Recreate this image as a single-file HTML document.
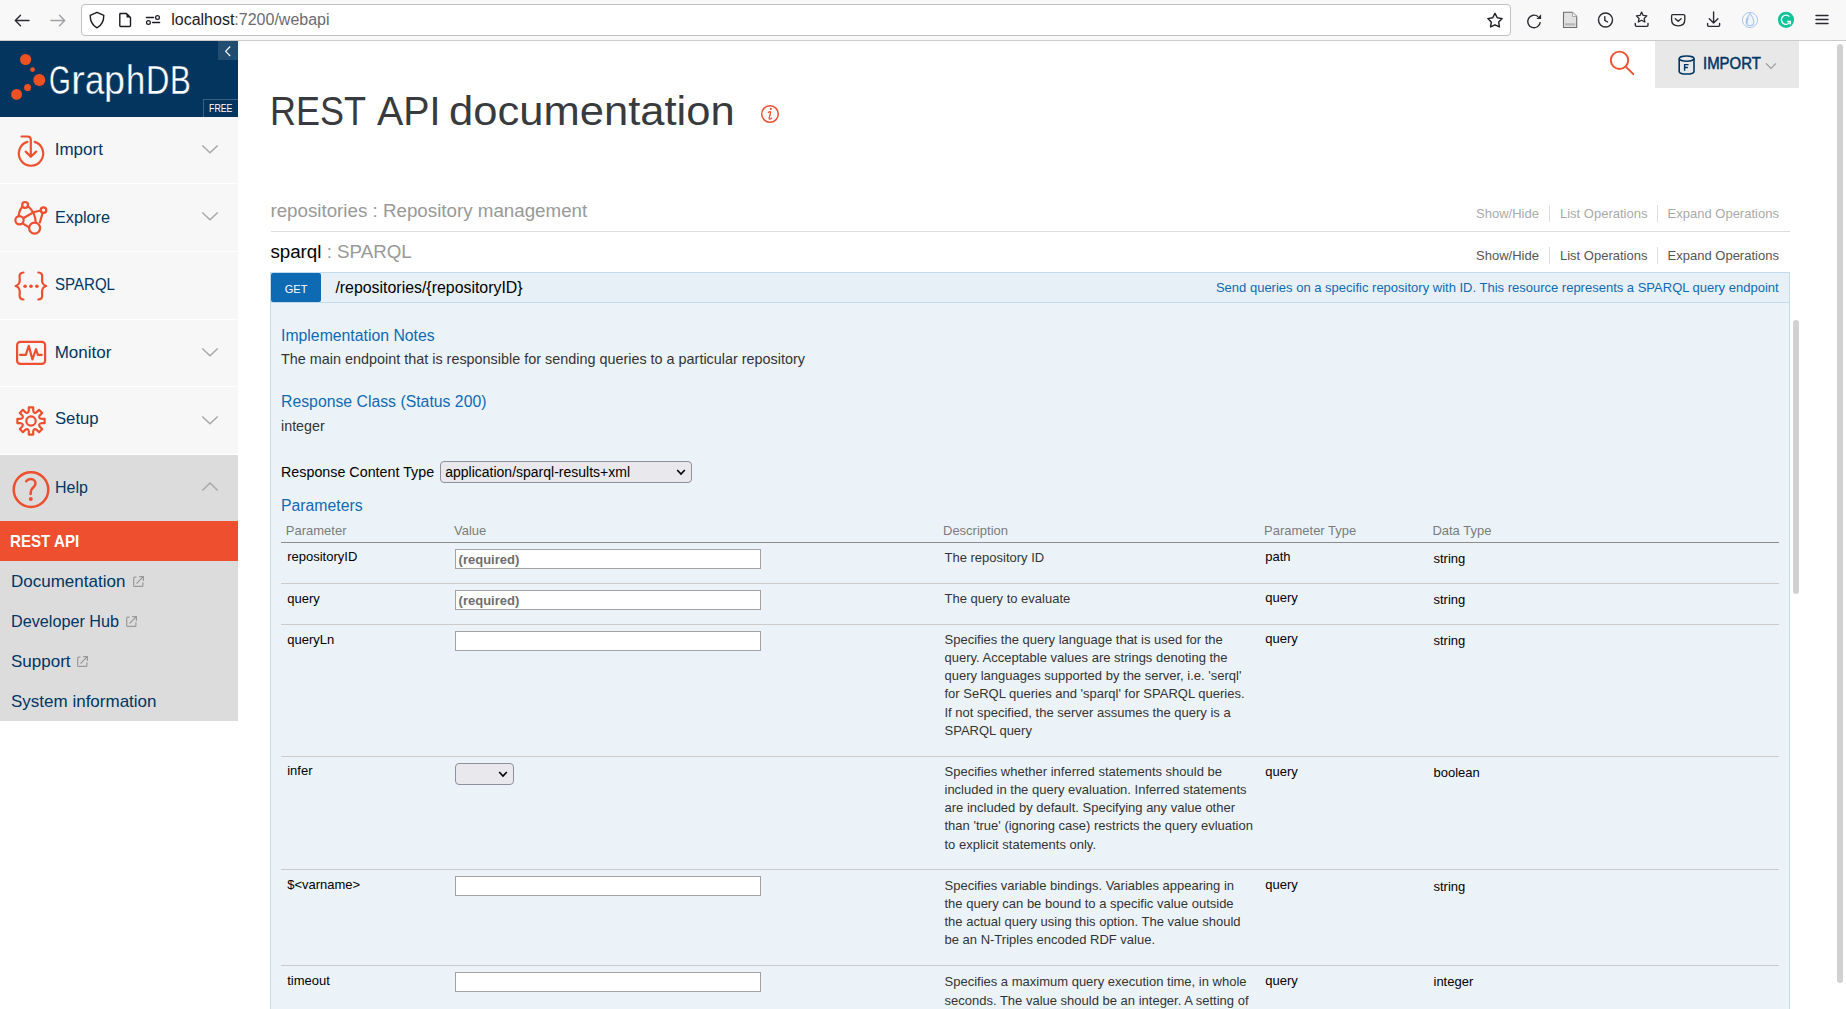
<!DOCTYPE html>
<html><head><meta charset="utf-8"><title>GraphDB REST API</title>
<style>
html,body{margin:0;padding:0;width:1846px;height:1009px;overflow:hidden;background:#fff;}
body{position:relative;font-family:"Liberation Sans",sans-serif;}
.t{position:absolute;white-space:nowrap;line-height:1;}
svg{overflow:visible}
</style></head><body>
<div style="position:absolute;left:0px;top:0px;width:1846px;height:40px;background:#f8f8f8"></div>
<div style="position:absolute;left:0px;top:40px;width:1846px;height:1px;background:#cdcac7"></div>
<div style="position:absolute;left:81px;top:4px;width:1430px;height:32px;background:#fff;border:1px solid #c2c2c6;border-radius:4px;box-sizing:border-box"></div>
<svg style="position:absolute;left:12px;top:10px;" width="20" height="20" viewBox="0 0 20 20"><path d="M17 10.5H3.5M8.5 5.3L3.3 10.5L8.5 15.7" fill="none" stroke="#2b2a33" stroke-width="1.4" stroke-linecap="round" stroke-linejoin="round"/></svg>
<svg style="position:absolute;left:48px;top:10px;" width="20" height="20" viewBox="0 0 20 20"><path d="M3 10.5H16.5M11.5 5.3L16.7 10.5L11.5 15.7" fill="none" stroke="#a0a0a6" stroke-width="1.4" stroke-linecap="round" stroke-linejoin="round"/></svg>
<svg style="position:absolute;left:88px;top:10px;" width="18" height="20" viewBox="0 0 18 20"><path d="M9 2.3L15.8 5.3C15.9 12 13.5 15.5 9 17.8C4.5 15.5 2.1 12 2.2 5.3Z" fill="none" stroke="#1c1b22" stroke-width="1.4" stroke-linejoin="round"/></svg>
<svg style="position:absolute;left:116px;top:10px;" width="18" height="20" viewBox="0 0 18 20"><path d="M4 3.5H10.5L14.5 7.5V15.5Q14.5 16.5 13.5 16.5H4.8Q3.8 16.5 3.8 15.5V4.5Q3.8 3.5 4.8 3.5Z" fill="none" stroke="#1c1b22" stroke-width="1.4" stroke-linejoin="round"/><path d="M10.5 3.5V7.5H14.5Z" fill="#1c1b22"/></svg>
<svg style="position:absolute;left:144px;top:10px;" width="18" height="20" viewBox="0 0 18 20"><path d="M2.4 7.5H9.6M8.6 12.5H15.6" stroke="#1c1b22" stroke-width="1.4" stroke-linecap="round"/><circle cx="13.5" cy="7.5" r="1.9" fill="none" stroke="#1c1b22" stroke-width="1.25"/><circle cx="4.45" cy="12.5" r="1.9" fill="none" stroke="#1c1b22" stroke-width="1.25"/></svg>
<div class="t" style="left:171.2px;top:12.26px;font-size:16px;color:#1c1b22">localhost<span style="color:#6c6c72">:7200/webapi</span></div>
<svg style="position:absolute;left:1485px;top:10px;" width="20" height="20" viewBox="0 0 20 20"><polygon points="10.00,3.40 12.29,7.74 17.13,8.58 13.71,12.11 14.41,16.97 10.00,14.80 5.59,16.97 6.29,12.11 2.87,8.58 7.71,7.74" fill="none" stroke="#1c1b22" stroke-width="1.4" stroke-linejoin="round"/></svg>
<svg style="position:absolute;left:1524px;top:9.5px;" width="20" height="20" viewBox="0 0 20 20"><path d="M14.2 6.7A6.3 6.3 0 1 0 16.3 12.2" fill="none" stroke="#2b2a33" stroke-width="1.4"/><path d="M17.1 4.3V9H12.4Z" fill="#2b2a33"/></svg>
<svg style="position:absolute;left:1560px;top:10px;" width="20" height="20" viewBox="0 0 20 20"><path d="M3.5 2.3H12.5L16.7 6.5V17.5H3.5Z" fill="#e2e2e2" stroke="#6e6e6e" stroke-width="1.1" stroke-linejoin="round"/><path d="M12.5 2.3V6.5H16.7" fill="#f0f0f0" stroke="#9a9a9a" stroke-width="0.8"/><rect x="5" y="13.2" width="10.2" height="2.4" fill="#b9b9b9"/></svg>
<svg style="position:absolute;left:1595px;top:10px;" width="22" height="20" viewBox="0 0 22 20"><circle cx="10.5" cy="10" r="7" fill="none" stroke="#2b2a33" stroke-width="1.4"/><path d="M9.8 6.6V10.3L12.6 12" fill="none" stroke="#2b2a33" stroke-width="1.4" stroke-linecap="round"/></svg>
<svg style="position:absolute;left:1632px;top:10px;" width="20" height="20" viewBox="0 0 20 20"><polygon points="9.60,2.10 11.19,5.42 14.83,5.90 12.17,8.43 12.83,12.05 9.60,10.30 6.37,12.05 7.03,8.43 4.37,5.90 8.01,5.42" fill="none" stroke="#2b2a33" stroke-width="1.3" stroke-linejoin="round"/><path d="M3.3 13.4V15.3Q3.3 16.4 4.4 16.4H14.9Q16 16.4 16 15.3V13.4" fill="none" stroke="#2b2a33" stroke-width="1.4" stroke-linecap="round"/></svg>
<svg style="position:absolute;left:1668px;top:10px;" width="20" height="20" viewBox="0 0 20 20"><path d="M3.6 5.8Q3.6 4.6 4.8 4.6H15.6Q16.8 4.6 16.8 5.8V9.8Q16.8 15.8 10.2 15.9Q3.6 15.8 3.6 9.8Z" fill="none" stroke="#2b2a33" stroke-width="1.35"/><path d="M7.3 8.7L10.2 11.3L13.1 8.7" fill="none" stroke="#2b2a33" stroke-width="1.45" stroke-linecap="round" stroke-linejoin="round"/></svg>
<svg style="position:absolute;left:1704px;top:10px;" width="20" height="20" viewBox="0 0 20 20"><path d="M9.6 2V13M5.3 8.8L9.6 13L13.9 8.8" fill="none" stroke="#2b2a33" stroke-width="1.4" stroke-linecap="round" stroke-linejoin="round"/><path d="M3.6 13.4V15.3Q3.6 16.4 4.7 16.4H14.5Q15.6 16.4 15.6 15.3V13.4" fill="none" stroke="#2b2a33" stroke-width="1.4" stroke-linecap="round"/></svg>
<svg style="position:absolute;left:1740px;top:10px;" width="20" height="20" viewBox="0 0 20 20"><circle cx="10" cy="10" r="7.6" fill="none" stroke="#a9c8f0" stroke-width="1"/><path d="M10 3.3Q14 8.5 14 12.2Q14 15.9 10 15.9Q6 15.9 6 12.2Q6 8.5 10 3.3Z" fill="#eef4fc" stroke="#93b9ea" stroke-width="0.9"/><path d="M8.3 7.5Q6.5 11 7 14" fill="none" stroke="#9dbfec" stroke-width="1.2"/></svg>
<svg style="position:absolute;left:1776px;top:10px;" width="20" height="20" viewBox="0 0 20 20"><circle cx="10" cy="9.8" r="8.1" fill="#15c39a"/><path d="M13.4 6.6A4.6 4.6 0 1 0 13.6 12.6" fill="none" stroke="#fff" stroke-width="1.3"/><path d="M11.2 11.5H14.3V14.5" fill="none" stroke="#fff" stroke-width="1.3"/></svg>
<svg style="position:absolute;left:1813px;top:10px;" width="18" height="20" viewBox="0 0 18 20"><path d="M3 5.5H15M3 9.5H15M3 13.5H15" stroke="#2b2a33" stroke-width="1.4" stroke-linecap="round"/></svg>
<div style="position:absolute;left:0px;top:41px;width:238px;height:76px;background:#03355e"></div>
<svg style="position:absolute;left:0px;top:41px;" width="60" height="76" viewBox="0 0 60 76"><circle cx="25.6" cy="18.5" r="5.6" fill="#f05123"/><circle cx="32.5" cy="28.599999999999994" r="2.4" fill="#f05123"/><circle cx="39.3" cy="39" r="6" fill="#f05123"/><circle cx="27.6" cy="46.5" r="3.5" fill="#f05123"/><circle cx="16.6" cy="53.400000000000006" r="5.4" fill="#f05123"/></svg>
<div class="t" style="left:49.35px;top:59.17px;font-size:41.5px;color:#fff;font-weight:400;transform:scaleX(0.674);transform-origin:0 0;-webkit-text-stroke:0.35px #003663">G</div>
<div class="t" style="left:70.98px;top:59.17px;font-size:41.5px;color:#fff;font-weight:400;transform:scaleX(1.0);transform-origin:0 0;-webkit-text-stroke:0.35px #003663">r</div>
<div class="t" style="left:84.80px;top:59.17px;font-size:41.5px;color:#fff;font-weight:400;transform:scaleX(0.838);transform-origin:0 0;-webkit-text-stroke:0.35px #003663">a</div>
<div class="t" style="left:103.90px;top:59.17px;font-size:41.5px;color:#fff;font-weight:400;transform:scaleX(0.906);transform-origin:0 0;-webkit-text-stroke:0.35px #003663">p</div>
<div class="t" style="left:125.60px;top:59.17px;font-size:41.5px;color:#fff;font-weight:400;transform:scaleX(0.833);transform-origin:0 0;-webkit-text-stroke:0.35px #003663">h</div>
<div class="t" style="left:145.86px;top:59.17px;font-size:41.5px;color:#fff;font-weight:400;transform:scaleX(0.78);transform-origin:0 0;-webkit-text-stroke:0.35px #003663">D</div>
<div class="t" style="left:170.04px;top:59.17px;font-size:41.5px;color:#fff;font-weight:400;transform:scaleX(0.752);transform-origin:0 0;-webkit-text-stroke:0.35px #003663">B</div>
<div style="position:absolute;left:218px;top:41px;width:20px;height:19px;background:rgba(255,255,255,0.12)"></div>
<svg style="position:absolute;left:218px;top:41px;" width="20" height="19" viewBox="0 0 20 19"><path d="M12.2 5.5L7.6 10.3L12.2 15" fill="none" stroke="#fff" stroke-width="1.1"/></svg>
<div style="position:absolute;left:203px;top:99px;width:35px;height:18px;border-left:1px solid rgba(255,255,255,0.22);border-top:1px solid rgba(255,255,255,0.22);box-sizing:border-box"></div>
<div class="t" style="left:208.80px;top:104.13px;font-size:10px;color:#fff;font-weight:400;transform:scaleX(0.88);transform-origin:0 0">FREE</div>
<div style="position:absolute;left:0px;top:117px;width:238px;height:604px;background:#fff"></div>
<div style="position:absolute;left:0px;top:117px;width:238px;height:66px;background:#f7f7f7"></div>
<div style="position:absolute;left:0px;top:184px;width:238px;height:67px;background:#f7f7f7"></div>
<div style="position:absolute;left:0px;top:252px;width:238px;height:67px;background:#f7f7f7"></div>
<div style="position:absolute;left:0px;top:320px;width:238px;height:66px;background:#f7f7f7"></div>
<div style="position:absolute;left:0px;top:387px;width:238px;height:67px;background:#f7f7f7"></div>
<div style="position:absolute;left:0px;top:455px;width:238px;height:66px;background:#dcdcdc"></div>
<div style="position:absolute;left:0px;top:521px;width:238px;height:40px;background:#ed4f2f"></div>
<div style="position:absolute;left:0px;top:561px;width:238px;height:160px;background:#dcdcdc"></div>
<div class="t" style="left:54.70px;top:140.51px;font-size:17px;color:#003663;font-weight:400;transform:scaleX(1.0);transform-origin:0 0">Import</div>
<div class="t" style="left:54.70px;top:208.51px;font-size:17px;color:#003663;font-weight:400;transform:scaleX(0.955);transform-origin:0 0">Explore</div>
<div class="t" style="left:54.70px;top:275.51px;font-size:17px;color:#003663;font-weight:400;transform:scaleX(0.886);transform-origin:0 0">SPARQL</div>
<div class="t" style="left:54.70px;top:343.51px;font-size:17px;color:#003663;font-weight:400;transform:scaleX(1.0);transform-origin:0 0">Monitor</div>
<div class="t" style="left:54.70px;top:410.41px;font-size:17px;color:#003663;font-weight:400;transform:scaleX(0.98);transform-origin:0 0">Setup</div>
<div class="t" style="left:54.70px;top:478.51px;font-size:17px;color:#003663;font-weight:400;transform:scaleX(0.94);transform-origin:0 0">Help</div>
<svg style="position:absolute;left:200px;top:140.7px;" width="20" height="16" viewBox="0 0 20 16"><path d="M2.3 4.5L10 11.8L17.7 4.5" fill="none" stroke="#a6a6a6" stroke-width="1.4"/></svg>
<svg style="position:absolute;left:200px;top:208.4px;" width="20" height="16" viewBox="0 0 20 16"><path d="M2.3 4.5L10 11.8L17.7 4.5" fill="none" stroke="#a6a6a6" stroke-width="1.4"/></svg>
<svg style="position:absolute;left:200px;top:343.9px;" width="20" height="16" viewBox="0 0 20 16"><path d="M2.3 4.5L10 11.8L17.7 4.5" fill="none" stroke="#a6a6a6" stroke-width="1.4"/></svg>
<svg style="position:absolute;left:200px;top:411.7px;" width="20" height="16" viewBox="0 0 20 16"><path d="M2.3 4.5L10 11.8L17.7 4.5" fill="none" stroke="#a6a6a6" stroke-width="1.4"/></svg>
<svg style="position:absolute;left:200px;top:478px;" width="20" height="16" viewBox="0 0 20 16"><path d="M2.3 12.5L10 5L17.7 12.5" fill="none" stroke="#a6a6a6" stroke-width="1.4"/></svg>
<svg style="position:absolute;left:10px;top:130px;" width="40" height="40" viewBox="0 0 40 40"><g fill="none" stroke="#ed4f2f" stroke-width="2.2" stroke-linecap="round" stroke-linejoin="round"><path d="M17.4 11.9A12.2 12.2 0 1 0 24.6 11.9"/><path d="M11.5 6.5H17.5Q20.8 6.5 20.8 9.8V26.5"/><path d="M15.7 21.6L20.8 26.7L26.1 21.6"/></g></svg>
<svg style="position:absolute;left:10px;top:197px;" width="40" height="40" viewBox="0 0 40 40"><g fill="none" stroke="#ed4f2f" stroke-width="2.2"><circle cx="15.1" cy="7.9" r="2.9"/><circle cx="33.5" cy="13.1" r="2.8"/><circle cx="9.5" cy="23.2" r="4.1"/><circle cx="24.6" cy="31.1" r="5.5"/><path d="M12.6 9.6Q9 13.5 8.7 19.1"/><path d="M17.8 9Q25.5 15.5 25.7 25.6"/><path d="M13.2 21.3L23.5 15.2L30.8 13.5"/><path d="M32.7 15.8L29.6 26.2"/><path d="M12.6 26.4L19.4 30.6"/></g></svg>
<svg style="position:absolute;left:10px;top:265px;" width="40" height="40" viewBox="0 0 40 40"><g fill="none" stroke="#ed4f2f" stroke-width="2.2" stroke-linecap="round" stroke-linejoin="round"><path d="M13.5 7.5C10.5 7.5 9.4 9.3 9.6 12C9.9 15.8 10.3 19.6 5.6 21C10.3 22.4 9.9 26.2 9.6 30C9.4 32.7 10.5 34.5 13.5 34.5"/><path d="M28.3 7.5C31.3 7.5 32.4 9.3 32.2 12C31.9 15.8 31.5 19.6 36.2 21C31.5 22.4 31.9 26.2 32.2 30C32.4 32.7 31.3 34.5 28.3 34.5"/></g><g fill="#ed4f2f"><circle cx="15.1" cy="21.2" r="1.8"/><circle cx="21" cy="21.2" r="1.8"/><circle cx="26.9" cy="21.2" r="1.8"/></g></svg>
<svg style="position:absolute;left:10px;top:333px;" width="40" height="40" viewBox="0 0 40 40"><g fill="none" stroke="#ed4f2f" stroke-width="2.2" stroke-linejoin="round"><rect x="7.1" y="8.9" width="28" height="22" rx="3.2"/><path d="M10 21.8H15.8L18.8 12.8L22.4 26.5L26 16.2L27.9 21.8H31.8" stroke-linecap="round"/></g></svg>
<svg style="position:absolute;left:10px;top:400px;" width="40" height="40" viewBox="0 0 40 40"><g fill="none" stroke="#ed4f2f" stroke-width="2.2" stroke-linejoin="round"><path d="M18.79 10.63L18.80 7.38L23.20 7.38L23.21 10.63Q23.83 14.16 26.77 12.11L29.08 9.81L32.19 12.92L29.89 15.23Q27.84 18.17 31.37 18.79L34.62 18.80L34.62 23.20L31.37 23.21Q27.84 23.83 29.89 26.77L32.19 29.08L29.08 32.19L26.77 29.89Q23.83 27.84 23.21 31.37L23.20 34.62L18.80 34.62L18.79 31.37Q18.17 27.84 15.23 29.89L12.92 32.19L9.81 29.08L12.11 26.77Q14.16 23.83 10.63 23.21L7.38 23.20L7.38 18.80L10.63 18.79Q14.16 18.17 12.11 15.23L9.81 12.92L12.92 9.81L15.23 12.11Q18.17 14.16 18.79 10.63Z"/><circle cx="21" cy="21" r="4.7"/></g></svg>
<svg style="position:absolute;left:8px;top:467px;" width="46" height="46" viewBox="0 0 46 46"><g fill="none" stroke="#ed4f2f" stroke-width="2.5" stroke-linecap="round"><circle cx="23" cy="22.6" r="17.3"/><path d="M18.2 14.2C19.3 12.7 20.8 12 22.7 12C25.6 12 27.5 14 27.5 16.6C27.5 19.2 25.4 20.3 24.1 21.6C22.9 22.8 22.6 24 22.6 27"/></g><circle cx="22.8" cy="32.1" r="2" fill="#ed4f2f"/></svg>
<div class="t" style="left:10.40px;top:533.01px;font-size:17px;color:#fff;font-weight:700;transform:scaleX(0.89);transform-origin:0 0">REST API</div>
<div class="t" style="left:11.00px;top:573.01px;font-size:17px;color:#003663;font-weight:400;">Documentation</div>
<svg style="position:absolute;left:131.7px;top:575.4px;" width="14" height="14" viewBox="0 0 14 14"><g fill="none" stroke="#9a9a9a" stroke-width="1.2"><path d="M4.5 2.2H2.6Q1.7 2.2 1.7 3.1V10.5Q1.7 11.4 2.6 11.4H10Q10.9 11.4 10.9 10.5V7.2"/><path d="M4.5 8.5L10.8 2.2M7.2 1.7H11.4V5.9"/></g></svg>
<div class="t" style="left:11.00px;top:612.91px;font-size:17px;color:#003663;font-weight:400;transform:scaleX(0.953);transform-origin:0 0">Developer Hub</div>
<svg style="position:absolute;left:125px;top:615.3px;" width="14" height="14" viewBox="0 0 14 14"><g fill="none" stroke="#9a9a9a" stroke-width="1.2"><path d="M4.5 2.2H2.6Q1.7 2.2 1.7 3.1V10.5Q1.7 11.4 2.6 11.4H10Q10.9 11.4 10.9 10.5V7.2"/><path d="M4.5 8.5L10.8 2.2M7.2 1.7H11.4V5.9"/></g></svg>
<div class="t" style="left:11.00px;top:652.81px;font-size:17px;color:#003663;font-weight:400;">Support</div>
<svg style="position:absolute;left:75.8px;top:655.2px;" width="14" height="14" viewBox="0 0 14 14"><g fill="none" stroke="#9a9a9a" stroke-width="1.2"><path d="M4.5 2.2H2.6Q1.7 2.2 1.7 3.1V10.5Q1.7 11.4 2.6 11.4H10Q10.9 11.4 10.9 10.5V7.2"/><path d="M4.5 8.5L10.8 2.2M7.2 1.7H11.4V5.9"/></g></svg>
<div class="t" style="left:11.00px;top:692.61px;font-size:17px;color:#003663;font-weight:400;">System information</div>
<svg style="position:absolute;left:1605px;top:46px;" width="34" height="34" viewBox="0 0 34 34"><g fill="none" stroke="#ed4f2f" stroke-width="1.9" stroke-linecap="round"><circle cx="14.5" cy="14.3" r="8.7"/><path d="M21 20.8L28.3 28.2"/></g></svg>
<div style="position:absolute;left:1655px;top:41px;width:144px;height:47px;background:#e8e8e8"></div>
<svg style="position:absolute;left:1675px;top:52px;" width="24" height="26" viewBox="0 0 24 26"><g fill="none" stroke="#003663" stroke-width="1.6"><ellipse cx="11.6" cy="6.6" rx="7.4" ry="2.6"/><path d="M4.2 6.6V19.4Q4.2 22 11.6 22Q19 22 19 19.4V6.6"/></g><path d="M9.6 18.8V12.6H13.6M9.6 15.5H12.9" fill="none" stroke="#003663" stroke-width="1.4"/></svg>
<div class="t" style="left:1702.60px;top:55.33px;font-size:16.5px;color:#003663;font-weight:400;transform:scaleX(0.905);transform-origin:0 0;-webkit-text-stroke:0.5px #003663">IMPORT</div>
<svg style="position:absolute;left:1764px;top:60px;" width="14" height="12" viewBox="0 0 14 12"><path d="M2 3.3L7 8.5L12 3.3" fill="none" stroke="#9a9a9a" stroke-width="1.2"/></svg>
<div class="t" style="left:270.40px;top:91.45px;font-size:41.4px;color:#383a3d;font-weight:400;transform:scaleX(0.869);transform-origin:0 0">REST</div>
<div class="t" style="left:377.00px;top:91.45px;font-size:41.4px;color:#383a3d;font-weight:400;transform:scaleX(0.952);transform-origin:0 0">API</div>
<div class="t" style="left:449.10px;top:91.45px;font-size:41.4px;color:#383a3d;font-weight:400;transform:scaleX(1.052);transform-origin:0 0">documentation</div>
<svg style="position:absolute;left:758px;top:102px;" width="24" height="24" viewBox="0 0 24 24"><circle cx="12" cy="12" r="8.3" fill="none" stroke="#ed4f2f" stroke-width="1.5"/><circle cx="12.8" cy="6.9" r="1.05" fill="#ed4f2f"/><path d="M10.3 10.5Q11.5 9.4 12.4 9.8Q12.8 10.2 12.3 11.8L11.2 16Q11 17.4 12.1 17.1Q13 16.8 13.6 16.1" fill="none" stroke="#ed4f2f" stroke-width="1.3" stroke-linecap="round"/></svg>
<div style="position:absolute;left:1837px;top:44px;width:6px;height:939px;background:#d1d1d1;border-radius:3px"></div>
<div class="t" style="left:270.40px;top:201.73px;font-size:18.75px;color:#999;font-weight:400;">repositories : Repository management</div>
<div class="t" style="left:1476.00px;top:207.20px;font-size:13px;color:#aaa;font-weight:400;">Show/Hide</div>
<div style="position:absolute;left:1549px;top:205.2px;width:1px;height:17px;background:#ddd"></div>
<div class="t" style="left:1560.00px;top:207.20px;font-size:13px;color:#aaa;font-weight:400;">List Operations</div>
<div style="position:absolute;left:1657px;top:205.2px;width:1px;height:17px;background:#ddd"></div>
<div class="t" style="left:1667.60px;top:207.20px;font-size:13px;color:#aaa;font-weight:400;">Expand Operations</div>
<div style="position:absolute;left:271px;top:231px;width:1519px;height:1px;background:#ddd"></div>
<div class="t" style="left:270.4px;top:243.13px;font-size:18.75px;color:#000">sparql<span style="color:#999"> : SPARQL</span></div>
<div class="t" style="left:1476.00px;top:249.00px;font-size:13px;color:#555;font-weight:400;">Show/Hide</div>
<div style="position:absolute;left:1549px;top:247px;width:1px;height:17px;background:#ddd"></div>
<div class="t" style="left:1560.00px;top:249.00px;font-size:13px;color:#555;font-weight:400;">List Operations</div>
<div style="position:absolute;left:1657px;top:247px;width:1px;height:17px;background:#ddd"></div>
<div class="t" style="left:1667.60px;top:249.00px;font-size:13px;color:#555;font-weight:400;">Expand Operations</div>
<div style="position:absolute;left:270px;top:272px;width:1520px;height:31px;background:#e7f0f7;border:1px solid #c3d9ec;box-sizing:border-box"></div>
<div style="position:absolute;left:271px;top:273px;width:50px;height:29px;background:#0f6ab4;border-radius:2px"></div>
<div class="t" style="left:284.80px;top:283.69px;font-size:11px;color:#fff;font-weight:400;">GET</div>
<div class="t" style="left:335.40px;top:279.54px;font-size:15.9px;color:#000;font-weight:400;">/repositories/{repositoryID}</div>
<div class="t" style="right:67.40000000000009px;top:281.20px;font-size:13px;color:#0f6ab4">Send queries on a specific repository with ID. This resource represents a SPARQL query endpoint</div>
<div style="position:absolute;left:270px;top:303px;width:1520px;height:720px;background:#ebf3f9;border:1px solid #c3d9ec;border-top:none;box-sizing:border-box"></div>
<div class="t" style="left:281.00px;top:327.83px;font-size:15.8px;color:#0f6ab4;font-weight:400;">Implementation Notes</div>
<div class="t" style="left:281.00px;top:352.01px;font-size:14.4px;color:#333;font-weight:400;">The main endpoint that is responsible for sending queries to a particular repository</div>
<div class="t" style="left:281.00px;top:394.13px;font-size:15.8px;color:#0f6ab4;font-weight:400;">Response Class (Status 200)</div>
<div class="t" style="left:281.00px;top:418.90px;font-size:14.3px;color:#333;font-weight:400;">integer</div>
<div class="t" style="left:281.00px;top:464.60px;font-size:14.3px;color:#000;font-weight:400;">Response Content Type</div>
<div style="position:absolute;left:440px;top:461px;width:252px;height:22px;background:#e9e9ed;border:1px solid #8f8f9d;border-radius:4px;box-sizing:border-box"></div>
<div class="t" style="left:445.20px;top:465.15px;font-size:14px;color:#000;font-weight:400;">application/sparql-results+xml</div>
<svg style="position:absolute;left:674px;top:466px;" width="14" height="12" viewBox="0 0 14 12"><path d="M3.2 4L7 8L10.8 4" fill="none" stroke="#000" stroke-width="1.6"/></svg>
<div class="t" style="left:281.00px;top:498.23px;font-size:15.8px;color:#0f6ab4;font-weight:400;">Parameters</div>
<div class="t" style="left:285.80px;top:524.00px;font-size:13px;color:#7b7b7b;font-weight:400;">Parameter</div>
<div class="t" style="left:454.00px;top:524.00px;font-size:13px;color:#7b7b7b;font-weight:400;">Value</div>
<div class="t" style="left:943.00px;top:524.00px;font-size:13px;color:#7b7b7b;font-weight:400;">Description</div>
<div class="t" style="left:1264.00px;top:524.00px;font-size:13px;color:#7b7b7b;font-weight:400;">Parameter Type</div>
<div class="t" style="left:1432.40px;top:524.00px;font-size:13px;color:#7b7b7b;font-weight:400;">Data Type</div>
<div style="position:absolute;left:281px;top:542px;width:1498px;height:1px;background:#8c8c8c"></div>
<div style="position:absolute;left:281px;top:583px;width:1498px;height:1px;background:#cbcbcb"></div>
<div style="position:absolute;left:281px;top:624px;width:1498px;height:1px;background:#cbcbcb"></div>
<div style="position:absolute;left:281px;top:756px;width:1498px;height:1px;background:#cbcbcb"></div>
<div style="position:absolute;left:281px;top:869px;width:1498px;height:1px;background:#cbcbcb"></div>
<div style="position:absolute;left:281px;top:965px;width:1498px;height:1px;background:#cbcbcb"></div>
<div class="t" style="left:287.20px;top:550.00px;font-size:13px;color:#000;font-weight:400;">repositoryID</div>
<div style="position:absolute;left:455px;top:549.3px;width:306px;height:20px;background:#fff;border:1px solid #a2a2a2;box-sizing:border-box"></div>
<div class="t" style="left:458.60px;top:552.90px;font-size:13px;color:#6e6e6e;font-weight:700;">(required)</div>
<div class="t" style="left:944.5px;font-size:13px;line-height:18.12px;color:#333;top:549.20px">The repository ID</div>
<div class="t" style="left:1265.30px;top:550.20px;font-size:13px;color:#000;font-weight:400;">path</div>
<div class="t" style="left:1433.50px;top:551.80px;font-size:13px;color:#000;font-weight:400;">string</div>
<div class="t" style="left:287.20px;top:591.60px;font-size:13px;color:#000;font-weight:400;">query</div>
<div style="position:absolute;left:455px;top:590.3px;width:306px;height:20px;background:#fff;border:1px solid #a2a2a2;box-sizing:border-box"></div>
<div class="t" style="left:458.60px;top:593.90px;font-size:13px;color:#6e6e6e;font-weight:700;">(required)</div>
<div class="t" style="left:944.5px;font-size:13px;line-height:18.12px;color:#333;top:590.40px">The query to evaluate</div>
<div class="t" style="left:1265.30px;top:591.40px;font-size:13px;color:#000;font-weight:400;">query</div>
<div class="t" style="left:1433.50px;top:592.60px;font-size:13px;color:#000;font-weight:400;">string</div>
<div class="t" style="left:287.20px;top:632.60px;font-size:13px;color:#000;font-weight:400;">queryLn</div>
<div style="position:absolute;left:455px;top:631px;width:306px;height:20px;background:#fff;border:1px solid #a2a2a2;box-sizing:border-box"></div>
<div class="t" style="left:944.5px;font-size:13px;line-height:18.12px;color:#333;top:631.10px">Specifies the query language that is used for the<br>query. Acceptable values are strings denoting the<br>query languages supported by the server, i.e. &#39;serql&#39;<br>for SeRQL queries and &#39;sparql&#39; for SPARQL queries.<br>If not specified, the server assumes the query is a<br>SPARQL query</div>
<div class="t" style="left:1265.30px;top:632.40px;font-size:13px;color:#000;font-weight:400;">query</div>
<div class="t" style="left:1433.50px;top:633.60px;font-size:13px;color:#000;font-weight:400;">string</div>
<div class="t" style="left:287.20px;top:764.20px;font-size:13px;color:#000;font-weight:400;">infer</div>
<div style="position:absolute;left:455px;top:763px;width:59px;height:22px;background:#e9e9ed;border:1px solid #8f8f9d;border-radius:4px;box-sizing:border-box"></div>
<svg style="position:absolute;left:496px;top:768px;" width="14" height="12" viewBox="0 0 14 12"><path d="M3.2 4L7 8L10.8 4" fill="none" stroke="#000" stroke-width="1.6"/></svg>
<div class="t" style="left:944.5px;font-size:13px;line-height:18.12px;color:#333;top:763.00px">Specifies whether inferred statements should be<br>included in the query evaluation. Inferred statements<br>are included by default. Specifying any value other<br>than &#39;true&#39; (ignoring case) restricts the query evluation<br>to explicit statements only.</div>
<div class="t" style="left:1265.30px;top:765.30px;font-size:13px;color:#000;font-weight:400;">query</div>
<div class="t" style="left:1433.50px;top:765.60px;font-size:13px;color:#000;font-weight:400;">boolean</div>
<div class="t" style="left:287.20px;top:878.00px;font-size:13px;color:#000;font-weight:400;">$&lt;varname&gt;</div>
<div style="position:absolute;left:455px;top:876px;width:306px;height:20px;background:#fff;border:1px solid #a2a2a2;box-sizing:border-box"></div>
<div class="t" style="left:944.5px;font-size:13px;line-height:18.12px;color:#333;top:877.00px">Specifies variable bindings. Variables appearing in<br>the query can be bound to a specific value outside<br>the actual query using this option. The value should<br>be an N-Triples encoded RDF value.</div>
<div class="t" style="left:1265.30px;top:878.20px;font-size:13px;color:#000;font-weight:400;">query</div>
<div class="t" style="left:1433.50px;top:879.60px;font-size:13px;color:#000;font-weight:400;">string</div>
<div class="t" style="left:287.20px;top:974.20px;font-size:13px;color:#000;font-weight:400;">timeout</div>
<div style="position:absolute;left:455px;top:972px;width:306px;height:20px;background:#fff;border:1px solid #a2a2a2;box-sizing:border-box"></div>
<div class="t" style="left:944.5px;font-size:13px;line-height:18.12px;color:#333;top:973.40px">Specifies a maximum query execution time, in whole<br>seconds. The value should be an integer. A setting of<br>0 or a negative number indicates an unlimited query<br>evaluation time.</div>
<div class="t" style="left:1265.30px;top:974.40px;font-size:13px;color:#000;font-weight:400;">query</div>
<div class="t" style="left:1433.50px;top:974.90px;font-size:13px;color:#000;font-weight:400;">integer</div>
<div style="position:absolute;left:1793px;top:320px;width:6px;height:274px;background:#d1d1d1;border-radius:3px"></div>
</body></html>
